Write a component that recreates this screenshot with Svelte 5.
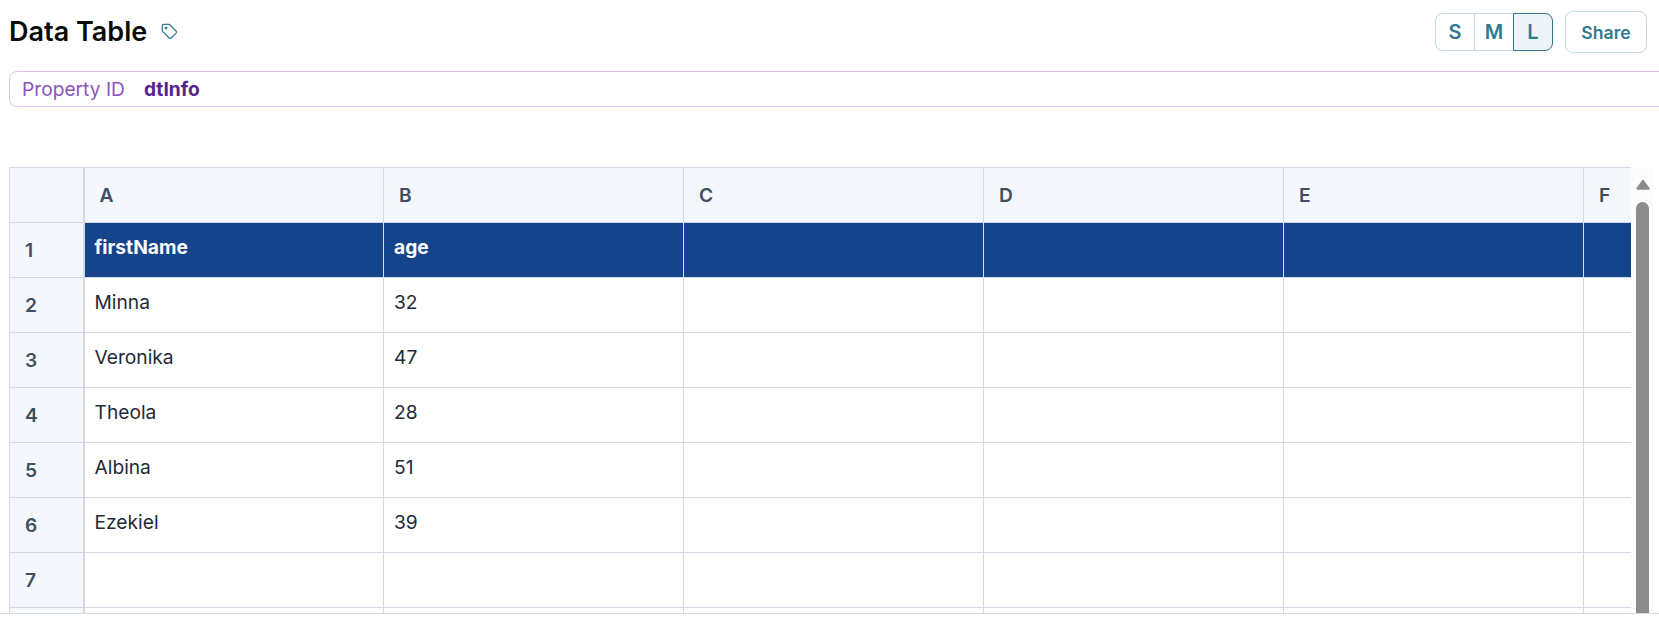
<script>
  const columns = ['A', 'B', 'C', 'D', 'E', 'F'];
  const rows = [
    ['firstName', 'age'],
    ['Minna', '32'],
    ['Veronika', '47'],
    ['Theola', '28'],
    ['Albina', '51'],
    ['Ezekiel', '39'],
    []
  ];
</script>

<div class="page">
  <header class="top">
    <div class="title">
      <h1>Data Table</h1>
      <svg class="tag" viewBox="0 0 16 16" width="17" height="17" fill="none" stroke="#337a91" stroke-width="1.2" stroke-linejoin="round">
        <path d="M1.2 2.6c0-.8.6-1.4 1.4-1.4h4.6c.4 0 .7.1 1 .4l6 6c.5.5.5 1.3 0 1.9l-4.6 4.6c-.5.5-1.4.5-1.9 0l-6-6c-.3-.3-.5-.6-.5-1z" />
        <circle cx="4.8" cy="4.8" r=".7" fill="#337a91" />
      </svg>
    </div>
    <div class="actions">
      <div class="sizes">
        <button>S</button>
        <button>M</button>
        <button class="active">L</button>
      </div>
      <button class="share">Share</button>
    </div>
  </header>

  <div class="property">
    <span class="label">Property ID</span>
    <span class="value">dtInfo</span>
  </div>

  <div class="sheet">
    <div class="grid">
      <table>
        <colgroup>
          <col class="row-col" />
          {#each columns as _}
            <col class="data-col" />
          {/each}
        </colgroup>
        <thead>
          <tr>
            <th class="corner"></th>
            {#each columns as c}
              <th class="col-head">{c}</th>
            {/each}
          </tr>
        </thead>
        <tbody>
          {#each rows as row, i}
            <tr class:first={i === 0}>
              <th class="row-head">{i + 1}</th>
              {#each columns as _, j}
                <td>{row[j] ?? ''}</td>
              {/each}
            </tr>
          {/each}
          <!-- next row is cut off by the bottom of the frame -->
          <tr>
            <th class="row-head"></th>
            {#each columns as _}
              <td></td>
            {/each}
          </tr>
        </tbody>
      </table>
    </div>
    <div class="scrollbar">
      <svg class="arrow" viewBox="0 0 14 11" width="14" height="11">
        <path d="M7 2 12.6 9.6H1.4z" fill="#8c8c8c" stroke="#8c8c8c" stroke-width="2.2" stroke-linejoin="round" />
      </svg>
      <div class="thumb"></div>
    </div>
  </div>
</div>

<style>
  :global(body) {
    margin: 0;
    background: #fff;
    font-family: Inter, "Liberation Sans", sans-serif;
    overflow: hidden;
  }

  .page {
    height: 614px;
    box-sizing: border-box;
    border-bottom: 1px solid #d3dde6;
    overflow: hidden;
  }

  .top {
    display: flex;
    justify-content: space-between;
    align-items: center;
    height: 42px;
    padding: 11px 12px 0 9px;
  }

  .title {
    display: flex;
    align-items: center;
    gap: 14px;
  }

  h1 {
    margin: 0;
    font-size: 27px;
    line-height: 40px;
    font-weight: 600;
    color: #0b0b0b;
  }

  .tag {
    display: block;
    margin-bottom: 2px;
  }

  .actions {
    display: flex;
    align-items: center;
    gap: 12px;
  }

  .sizes {
    display: flex;
    height: 38px;
    box-sizing: border-box;
    border: 1px solid #c5d7e1;
    border-radius: 8px;
  }

  .sizes button {
    width: 39px;
    margin: -1px 0;
    padding: 0;
    border: 0;
    border-left: 1px solid #c5d7e1;
    background: none;
    font: 600 20px Inter, sans-serif;
    color: #337a91;
  }

  .sizes button:first-child {
    width: 38px;
    border-left: 0;
  }

  .sizes .active {
    width: 40px;
    margin-right: -1px;
    background: #eef5f9;
    border: 1px solid #337a91;
    border-radius: 0 8px 8px 0;
  }

  .share {
    width: 82px;
    height: 42px;
    padding: 0;
    border: 1px solid #c5d7e1;
    border-radius: 8px;
    background: #fff;
    font: 600 17.6px Inter, sans-serif;
    color: #337a91;
  }

  .property {
    display: flex;
    align-items: center;
    gap: 19px;
    height: 36px;
    box-sizing: border-box;
    margin: 18px -10px 0 9px;
    padding: 0 12px;
    border: 1px solid #e2c4f2;
    border-radius: 8px;
    font-size: 19.2px;
  }

  .label {
    color: #8c54bf;
  }

  .value {
    font-weight: 700;
    color: #55258f;
  }

  .sheet {
    display: flex;
    margin: 60px 5px 0 9px;
  }

  .grid {
    width: 1622px;
    overflow: hidden;
  }

  table {
    table-layout: fixed;
    width: 1874px;
    border-collapse: collapse;
    color: #1f2a37;
    font-size: 19.2px;
  }

  .row-col {
    width: 74px;
  }

  .data-col {
    width: 300px;
  }

  tr {
    height: 55px;
  }

  th,
  td {
    box-sizing: border-box;
    padding: 0;
    border: 1px solid #d0dbe5;
    text-align: left;
  }

  thead th {
    background: #f4f7fb;
    font-weight: 600;
    color: #3f4f5f;
  }

  .col-head {
    padding-left: 15px;
  }

  .row-head {
    padding-left: 15px;
    background: #f4f7fb;
    font-weight: 600;
    color: #3f4f5f;
    border-right-width: 2px;
  }

  .corner {
    border-right-width: 2px;
  }

  td {
    padding: 0 10px 6px;
    white-space: nowrap;
  }

  .first td {
    background: #16448c;
    color: #fff;
    font-weight: 700;
  }

  .scrollbar {
    flex: none;
    width: 23px;
    height: 446px;
    display: flex;
    flex-direction: column;
    align-items: center;
    background: #fcfcfc;
  }

  .arrow {
    display: block;
    flex: none;
    margin-top: 12px;
  }

  .thumb {
    flex: 1;
    width: 13px;
    margin-top: 12px;
    background: #8c8c8c;
    border-radius: 7px 7px 0 0;
  }
</style>
